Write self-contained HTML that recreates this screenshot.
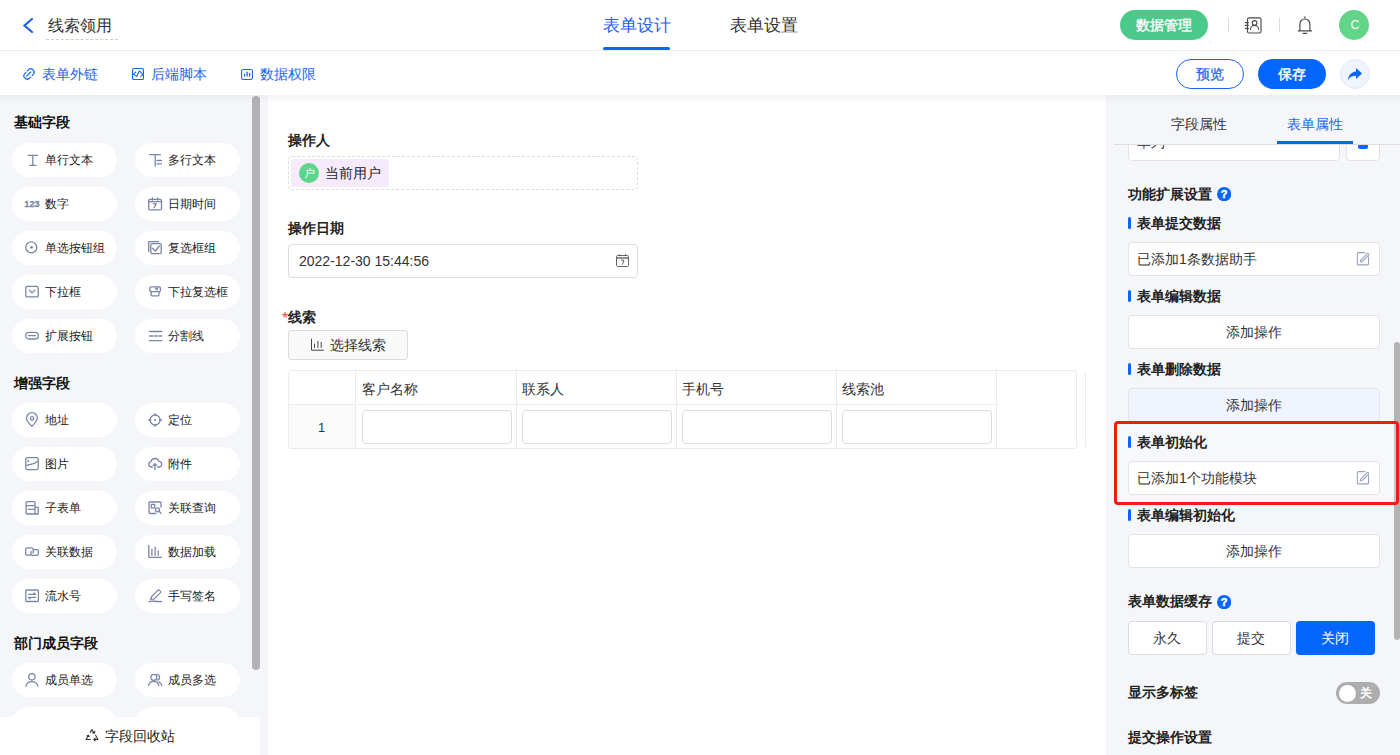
<!DOCTYPE html>
<html><head><meta charset="utf-8">
<style>
*{box-sizing:border-box;margin:0;padding:0}
html,body{width:1400px;height:755px;overflow:hidden;background:#fff;font-family:"Liberation Sans",sans-serif;color:#222}
.abs{position:absolute}
#hdr{position:absolute;left:0;top:0;width:1400px;height:51px;background:#fff;border-bottom:1px solid #ebebeb}
#tool{position:absolute;left:0;top:51px;width:1400px;height:44px;background:#fff}
#left{position:absolute;left:0;top:95px;width:268px;height:660px;background:#f5f6fa;overflow:hidden}
#center{position:absolute;left:268px;top:95px;width:838px;height:660px;background:#fff;overflow:hidden}
#right{position:absolute;left:1106px;top:95px;width:294px;height:660px;background:#f5f6fa;overflow:hidden}
.t{position:absolute;white-space:nowrap;line-height:1}
.sec{font-size:14px;font-weight:bold;color:#111}
.fb{position:absolute;width:105px;height:34px;background:#fff;border-radius:17px}
.fb span{position:absolute;left:33px;top:11px;font-size:12px;line-height:13px;color:#222;white-space:nowrap}
.fb i{position:absolute;left:13px;top:10px;width:14px;height:14px;font-style:normal}
.fb i svg{display:block}
.lnk{color:#1a64f0;font-size:14px}
.lbl{font-size:14px;font-weight:bold;color:#222}
.rbar{position:absolute;left:22px;width:3px;height:12px;margin-top:1px;background:#0565ff;border-radius:1.5px}
.rbox{position:absolute;left:22px;width:252px;height:34px;background:#fff;border:1px solid #e3e3e3;border-radius:4px}
.rbox .c{position:absolute;left:0;right:0;top:9px;text-align:center;font-size:14px;line-height:14px;color:#333}
.rbox .l{position:absolute;left:8px;top:9px;font-size:14px;line-height:14px;color:#333;white-space:nowrap}
.rbox svg{position:absolute;left:226px;top:7px}
th,td{padding:0}
.cell{position:absolute;border-right:1px solid #ebebeb}
.inp{position:absolute;background:#fff;border:1px solid #dcdcdc;border-radius:4px}
</style></head><body>
<div id="hdr">
  <svg class="abs" style="left:21px;top:17px" width="14" height="17" viewBox="0 0 14 17"><path d="M11 2L3.5 8.5 11 15" fill="none" stroke="#1a64f0" stroke-width="2.2" stroke-linecap="round"/></svg>
  <div class="t" style="left:48px;top:18px;font-size:16px;color:#333">线索领用</div>
  <div class="abs" style="left:46px;top:39px;width:72px;border-top:1px dashed #ccc"></div>
  <div class="t" style="left:603px;top:17px;font-size:17px;color:#1a64f0">表单设计</div>
  <div class="abs" style="left:603px;top:47px;width:67px;height:3px;background:#0565ff;border-radius:2px"></div>
  <div class="t" style="left:730px;top:17px;font-size:17px;color:#333">表单设置</div>
  <div class="abs" style="left:1120px;top:10px;width:88px;height:30px;border-radius:15px;background:#4bc98b"></div>
  <div class="t" style="left:1136px;top:18px;font-size:14px;color:#fff;-webkit-text-stroke:0.35px #fff">数据管理</div>
  <div class="abs" style="left:1228px;top:18px;width:1px;height:14px;background:#ddd"></div>
  <svg class="abs" style="left:1244px;top:16px" width="19" height="19" viewBox="0 0 19 19" fill="none" stroke="#4a4a4a" stroke-width="1.15" stroke-linecap="round"><rect x="3.5" y="1.8" width="13.5" height="15.2" rx="1.5"/><path d="M1.2 6.6h3.2M1.2 9.4h3.2M1.2 12.3h3.2"/><circle cx="10.6" cy="6.9" r="2.3"/><path d="M6.4 13.4a4.15 4 0 0 1 8.3 0"/></svg>
  <div class="abs" style="left:1279px;top:18px;width:1px;height:14px;background:#ddd"></div>
  <svg class="abs" style="left:1297px;top:16px" width="16" height="19" viewBox="0 0 16 19" fill="none" stroke="#4a4a4a" stroke-width="1.2" stroke-linecap="round" stroke-linejoin="round"><path d="M7.9 0.9v0.9M2.9 14.6V8.2a5 5.2 0 0 1 10 0V14.6M1.3 14.9h13.3M6.2 17.4h3.5"/></svg>
  <div class="abs" style="left:1339px;top:10px;width:30px;height:30px;border-radius:15px;background:#62d589"></div>
  <div class="t" style="left:1350.5px;top:19.3px;font-size:12.3px;color:#fff">C</div>
</div>
<div id="tool">
  <svg class="abs" style="left:23px;top:17px" width="12" height="12" viewBox="0 0 12 12" fill="none" stroke="#1a64f0" stroke-width="1.15" stroke-linecap="round"><path d="M4.3 2.8L5.3 1.9A3 3 0 0 1 10.1 6.7L9.1 7.7M7.7 9.2L6.7 10.1A3 3 0 0 1 1.9 5.3L2.9 4.3M3.6 8.2L7.8 4"/></svg>
  <div class="t lnk" style="left:42px;top:16px">表单外链</div>
  <svg class="abs" style="left:132px;top:17px" width="12" height="12" viewBox="0 0 12 12" fill="none" stroke="#1a64f0" stroke-width="1.1" stroke-linecap="round" stroke-linejoin="round"><rect x="0.55" y="0.55" width="10.9" height="10.9" rx="1.3"/><path d="M3.6 4.2L1.4 6.3 4.7 8.4 7.3 2.9 11 6.3 8.8 8.3"/></svg>
  <div class="t lnk" style="left:151px;top:16px">后端脚本</div>
  <svg class="abs" style="left:241px;top:18px" width="12" height="11" viewBox="0 0 12 11" fill="none" stroke="#1a64f0" stroke-width="1.1" stroke-linecap="round"><rect x="0.55" y="0.55" width="10.9" height="9.9" rx="1.8"/><path d="M3.5 5.2V6.9M6.1 3.1V6.9M8.6 4.5V6.9" stroke-width="1.3"/></svg>
  <div class="t lnk" style="left:260px;top:16px">数据权限</div>
  <div class="abs" style="left:1176px;top:8px;width:68px;height:30px;border-radius:15px;border:1px solid #1a64f0"></div>
  <div class="t" style="left:1196px;top:16px;font-size:14px;color:#1a64f0;-webkit-text-stroke:0.25px #1a64f0">预览</div>
  <div class="abs" style="left:1258px;top:8px;width:68px;height:30px;border-radius:15px;background:#0565ff"></div>
  <div class="t" style="left:1278px;top:16px;font-size:14px;color:#fff;-webkit-text-stroke:0.45px #fff">保存</div>
  <div class="abs" style="left:1340px;top:8px;width:30px;height:30px;border-radius:15px;background:#eff4fe;border:1px solid #e0e8fa"></div>
  <svg class="abs" style="left:1347px;top:16px" width="16" height="14" viewBox="0 0 16 14"><path d="M9 1l6 5.5L9 12V8.8C5 8.8 2.8 10 1 13c.5-4.5 3-8 8-8.5z" fill="#0565ff"/></svg>
</div>
<div id="left">
  <div class="t sec" style="left:14px;top:20px">基础字段</div><div class="fb" style="left:12px;top:48px"><i><svg width="14" height="14" viewBox="0 0 14 14" style="overflow:visible" fill="none" stroke="#7b86a6" stroke-width="1.3" stroke-linecap="round" stroke-linejoin="round"><path d="M3 2.3H12.6M4.8 12.4H10.9M7.8 2.3V12.4"/></svg></i><span>单行文本</span></div><div class="fb" style="left:135px;top:48px"><i><svg width="14" height="14" viewBox="0 0 14 14" style="overflow:visible" fill="none" stroke="#7b86a6" stroke-width="1.3" stroke-linecap="round" stroke-linejoin="round"><path d="M1.7 1.7H12.4M7.2 1.7V12.9M8.9 7.5H13.5M8.9 10.8H13.5"/></svg></i><span>多行文本</span></div><div class="fb" style="left:12px;top:92px"><i><span style="position:absolute;left:-0.8px;top:2.8px;font-size:9.2px;line-height:9px;font-weight:bold;-webkit-text-stroke:0.3px #7b86a6;letter-spacing:0.1px;color:#7b86a6;font-family:'Liberation Sans',sans-serif;font-style:normal">123</span></i><span>数字</span></div><div class="fb" style="left:135px;top:92px"><i><svg width="14" height="14" viewBox="0 0 14 14" style="overflow:visible" fill="none" stroke="#7b86a6" stroke-width="1.3" stroke-linecap="round" stroke-linejoin="round"><rect x="0.7" y="2.3" width="12.8" height="10.6" rx="1.5"/><path d="M4.4 1V3.2M9.7 1V3.2M0.7 4.6H13.5M5.3 6.6H8.2L6.1 10.7"/></svg></i><span>日期时间</span></div><div class="fb" style="left:12px;top:136px"><i><svg width="14" height="14" viewBox="0 0 14 14" style="overflow:visible" fill="none" stroke="#7b86a6" stroke-width="1.3" stroke-linecap="round" stroke-linejoin="round"><circle cx="6.3" cy="6.4" r="5.5"/><circle cx="6.5" cy="6.3" r="1.4" fill="#7b86a6" stroke="none"/></svg></i><span>单选按钮组</span></div><div class="fb" style="left:135px;top:136px"><i><svg width="14" height="14" viewBox="0 0 14 14" style="overflow:visible" fill="none" stroke="#7b86a6" stroke-width="1.3" stroke-linecap="round" stroke-linejoin="round"><path d="M0.7 10.6V0.7H10.6"/><rect x="2.8" y="2.6" width="10.4" height="10" rx="1"/><path d="M4.4 7.2L7.4 10 11.3 5"/></svg></i><span>复选框组</span></div><div class="fb" style="left:12px;top:180px"><i><svg width="14" height="14" viewBox="0 0 14 14" style="overflow:visible" fill="none" stroke="#7b86a6" stroke-width="1.3" stroke-linecap="round" stroke-linejoin="round"><rect x="0.8" y="1.4" width="12.4" height="10.5" rx="1.2"/><path d="M4.4 5.3L7.1 7.9 9.8 5.3"/></svg></i><span>下拉框</span></div><div class="fb" style="left:135px;top:180px"><i><svg width="14" height="14" viewBox="0 0 14 14" style="overflow:visible" fill="none" stroke="#7b86a6" stroke-width="1.3" stroke-linecap="round" stroke-linejoin="round"><rect x="1.75" y="1.85" width="10.7" height="4.7" rx="1.2"/><path d="M3.15 6.6V9.85A1 1 0 0 0 4.15 10.85H10.05A1 1 0 0 0 11.05 9.85V6.6M7.4 2.9L8.7 4.9 10 2.9"/></svg></i><span>下拉复选框</span></div><div class="fb" style="left:12px;top:224px"><i><svg width="14" height="14" viewBox="0 0 14 14" style="overflow:visible" fill="none" stroke="#7b86a6" stroke-width="1.3" stroke-linecap="round" stroke-linejoin="round"><rect x="0.7" y="3.4" width="12.6" height="6.6" rx="3.3"/><path d="M3.4 6.7H10.5"/></svg></i><span>扩展按钮</span></div><div class="fb" style="left:135px;top:224px"><i><svg width="14" height="14" viewBox="0 0 14 14" style="overflow:visible" fill="none" stroke="#7b86a6" stroke-width="1.3" stroke-linecap="round" stroke-linejoin="round"><path d="M1.6 2.5H13.7M1.6 7H4.9M6.5 7H9.3M11 7H13.7M1.6 11.7H13.7"/></svg></i><span>分割线</span></div><div class="t sec" style="left:14px;top:281px">增强字段</div><div class="fb" style="left:12px;top:308px"><i><svg width="14" height="14" viewBox="0 0 14 14" style="overflow:visible" fill="none" stroke="#7b86a6" stroke-width="1.3" stroke-linecap="round" stroke-linejoin="round"><path d="M6.9 13.3C4.2 10.7 1.5 8.3 1.5 5.1A5.4 5.4 0 0 1 12.3 5.1C12.3 8.3 9.6 10.7 6.9 13.3Z"/><circle cx="7" cy="5.3" r="1.7"/></svg></i><span>地址</span></div><div class="fb" style="left:135px;top:308px"><i><svg width="14" height="14" viewBox="0 0 14 14" style="overflow:visible" fill="none" stroke="#7b86a6" stroke-width="1.3" stroke-linecap="round" stroke-linejoin="round"><circle cx="7.1" cy="7" r="5"/><circle cx="7.1" cy="7" r="1.1" fill="#7b86a6" stroke="none"/><path d="M7.1 0.6V2.6M7.1 11.4V13.4M0.7 7H2.7M11.5 7H13.5"/></svg></i><span>定位</span></div><div class="fb" style="left:12px;top:352px"><i><svg width="14" height="14" viewBox="0 0 14 14" style="overflow:visible" fill="none" stroke="#7b86a6" stroke-width="1.3" stroke-linecap="round" stroke-linejoin="round"><rect x="0.8" y="0.7" width="12.4" height="12" rx="1.5"/><path d="M2.9 3.3L3.6 4.6M2 8.6C4.5 6.8 8.2 8.3 12.6 4.3"/></svg></i><span>图片</span></div><div class="fb" style="left:135px;top:352px"><i><svg width="14" height="14" viewBox="0 0 14 14" style="overflow:visible" fill="none" stroke="#7b86a6" stroke-width="1.3" stroke-linecap="round" stroke-linejoin="round"><path d="M4.3 10H3.3A2.7 2.7 0 0 1 2.9 4.7A4.1 4.1 0 0 1 10.8 4.3A2.8 2.8 0 0 1 10.8 10H9.7M6.9 12.5V6.6M5.1 8.4L6.9 6.6 8.7 8.4"/></svg></i><span>附件</span></div><div class="fb" style="left:12px;top:396px"><i><svg width="14" height="14" viewBox="0 0 14 14" style="overflow:visible" fill="none" stroke="#7b86a6" stroke-width="1.3" stroke-linecap="round" stroke-linejoin="round"><path d="M10 5.6V1.7A1 1 0 0 0 9 0.7H2.1A1 1 0 0 0 1.1 1.7V12A1 1 0 0 0 2.1 13H13.2V6.3H10V13M1.1 4.6H10M3.3 8.3H10"/></svg></i><span>子表单</span></div><div class="fb" style="left:135px;top:396px"><i><svg width="14" height="14" viewBox="0 0 14 14" style="overflow:visible" fill="none" stroke="#7b86a6" stroke-width="1.3" stroke-linecap="round" stroke-linejoin="round"><path d="M13 6V2A1 1 0 0 0 12 1H2A1 1 0 0 0 1 2V11.5A1 1 0 0 0 2 12.5H7.8"/><rect x="3.3" y="3.4" width="3.4" height="3.4"/><circle cx="9.5" cy="8.8" r="2"/><path d="M11 10.3L13 12.3"/></svg></i><span>关联查询</span></div><div class="fb" style="left:12px;top:440px"><i><svg width="14" height="14" viewBox="0 0 14 14" style="overflow:visible" fill="none" stroke="#7b86a6" stroke-width="1.3" stroke-linecap="round" stroke-linejoin="round"><path d="M5.6 10.2H2.3A1.7 1.7 0 0 1 0.6 8.5V4.5A1.7 1.7 0 0 1 2.3 2.8H6.5A1.7 1.7 0 0 1 8.2 4.5V8M8.5 4.6H11.7A1.7 1.7 0 0 1 13.4 6.3V8.7A1.7 1.7 0 0 1 11.7 10.4H7.7A1.7 1.7 0 0 1 6 8.7V6.5"/></svg></i><span>关联数据</span></div><div class="fb" style="left:135px;top:440px"><i><svg width="14" height="14" viewBox="0 0 14 14" style="overflow:visible" fill="none" stroke="#7b86a6" stroke-width="1.3" stroke-linecap="round" stroke-linejoin="round"><path d="M0.8 0.5V12.3H13.5M3.9 4.3V10.3M7.1 2.1V10.3M10.3 5.8V10.3"/></svg></i><span>数据加载</span></div><div class="fb" style="left:12px;top:484px"><i><svg width="14" height="14" viewBox="0 0 14 14" style="overflow:visible" fill="none" stroke="#7b86a6" stroke-width="1.3" stroke-linecap="round" stroke-linejoin="round"><rect x="0.8" y="1" width="12.6" height="11.5" rx="1"/><path d="M3.5 5.3H10.5L8.9 3.9M10.5 8.4H3.5L5.1 9.8"/></svg></i><span>流水号</span></div><div class="fb" style="left:135px;top:484px"><i><svg width="14" height="14" viewBox="0 0 14 14" style="overflow:visible" fill="none" stroke="#7b86a6" stroke-width="1.3" stroke-linecap="round" stroke-linejoin="round"><path d="M2.7 10.3L3.5 7.6 9.8 1.4A1.3 1.3 0 0 1 11.6 1.4L12.3 2.1A1.3 1.3 0 0 1 12.3 3.9L6 10.1ZM1 12.6C3.5 11.4 6 12.8 13.6 12.5"/></svg></i><span>手写签名</span></div><div class="t sec" style="left:14px;top:541px">部门成员字段</div><div class="fb" style="left:12px;top:568px"><i><svg width="14" height="14" viewBox="0 0 14 14" style="overflow:visible" fill="none" stroke="#7b86a6" stroke-width="1.3" stroke-linecap="round" stroke-linejoin="round"><circle cx="6.9" cy="3.8" r="3.2"/><path d="M0.9 13.2C1.5 10.4 3.9 8.6 6.9 8.6S12.3 10.4 12.9 13.2"/></svg></i><span>成员单选</span></div><div class="fb" style="left:135px;top:568px"><i><svg width="14" height="14" viewBox="0 0 14 14" style="overflow:visible" fill="none" stroke="#7b86a6" stroke-width="1.3" stroke-linecap="round" stroke-linejoin="round"><circle cx="5.8" cy="4.3" r="3"/><path d="M0.6 12.6C1 9.8 3 8.3 5.8 8.3S10.4 9.8 10.8 12.6M8.7 1.3A3 3 0 0 1 9.3 7.2M11 8.9C12.6 9.7 13.5 11 13.8 12.6"/></svg></i><span>成员多选</span></div><div class="fb" style="left:12px;top:612px"><i><svg width="14" height="14" viewBox="0 0 14 14" style="overflow:visible" fill="none" stroke="#7b86a6" stroke-width="1.3" stroke-linecap="round" stroke-linejoin="round"><circle cx="6.9" cy="3.8" r="3.2"/><path d="M0.9 13.2C1.5 10.4 3.9 8.6 6.9 8.6S12.3 10.4 12.9 13.2"/></svg></i><span>部门单选</span></div><div class="fb" style="left:135px;top:612px"><i><svg width="14" height="14" viewBox="0 0 14 14" style="overflow:visible" fill="none" stroke="#7b86a6" stroke-width="1.3" stroke-linecap="round" stroke-linejoin="round"><circle cx="5.8" cy="4.3" r="3"/><path d="M0.6 12.6C1 9.8 3 8.3 5.8 8.3S10.4 9.8 10.8 12.6M8.7 1.3A3 3 0 0 1 9.3 7.2M11 8.9C12.6 9.7 13.5 11 13.8 12.6"/></svg></i><span>部门多选</span></div>
  <div class="abs" style="left:252px;top:1px;width:8px;height:574px;border-radius:4px;background:#b3b3b3"></div>
  <div class="abs" style="left:0;top:622px;width:260px;height:38px;background:#fff"></div>
  <svg class="abs" style="left:85px;top:633px" width="14" height="14" viewBox="0 0 14 14" fill="none" stroke="#333" stroke-width="1.1" stroke-linecap="round" stroke-linejoin="round"><path d="M5.2 4.4L7 1.5l2.3 3.8M9.9 3.4l-.6 1.9-1.9-.5M10.6 7.2l2.4 4.3H8.8M10.2 10.1L8.8 11.5l1.4 1.4M5.4 11.5H1l2.5-4.3M2.1 7.8l1.4-.6.6 1.5"/></svg>
  <div class="t" style="left:105px;top:634px;font-size:14px;color:#222">字段回收站</div>
</div>
<div id="center">
  
  <div class="t lbl" style="left:20px;top:38px">操作人</div>
  <div class="abs" style="left:20px;top:61px;width:350px;height:34px;border:1px dashed #ddd;border-radius:4px"></div>
  <div class="abs" style="left:23px;top:64px;width:98px;height:28px;background:#f6eafd;border-radius:2px"></div>
  <div class="abs" style="left:31px;top:68px;width:20px;height:20px;border-radius:10px;background:#5dd68b"></div>
  <div class="t" style="left:36px;top:73px;font-size:11px;color:#fff">户</div>
  <div class="t" style="left:57px;top:71px;font-size:14px;color:#222">当前用户</div>

  <div class="t lbl" style="left:20px;top:126px">操作日期</div>
  <div class="inp" style="left:20px;top:149px;width:350px;height:34px"></div>
  <div class="t" style="left:31px;top:159px;font-size:14px;color:#333">2022-12-30 15:44:56</div>
  <svg class="abs" style="left:347px;top:158px" width="15" height="15" viewBox="0 0 15 15" fill="none" stroke="#555" stroke-width="0.9"><rect x="1.5" y="2.5" width="12" height="11" rx="1.2"/><path d="M1.5 5h12" stroke-width="1.3"/><path d="M4.5 1.2v2M10.5 1.2v2M6 7.2h3l-1.6 4.5"/></svg>

  <div class="t" style="left:14px;top:216px;font-size:16px;color:#e74c3c">*</div>
  <div class="t lbl" style="left:20px;top:215px">线索</div>
  <div class="abs" style="left:20px;top:235px;width:120px;height:30px;background:#f9f9f9;border:1px solid #dcdcdc;border-radius:3px"></div>
  <svg class="abs" style="left:310px;top:338px;position:fixed" width="15" height="14" viewBox="0 0 15 14" fill="none" stroke="#444" stroke-width="1" stroke-linecap="butt"><path d="M1.5 0.7V12.2H13.8M4.5 5.7V9.8M7.9 3V9.8M11.2 4V9.8"/></svg>
  <div class="t" style="left:62px;top:243px;font-size:14px;color:#333">选择线索</div>

  <div class="abs" style="left:20px;top:275px;width:789px;height:79px;border:1px solid #ebebeb;border-radius:3px"></div>
  <div class="abs" style="left:21px;top:310px;width:66px;height:43px;background:#fafafa"></div>
  <div class="abs" style="left:87px;top:276px;width:1px;height:77px;background:#ebebeb"></div>
  <div class="abs" style="left:248px;top:276px;width:1px;height:77px;background:#ebebeb"></div>
  <div class="abs" style="left:408px;top:276px;width:1px;height:77px;background:#ebebeb"></div>
  <div class="abs" style="left:568px;top:276px;width:1px;height:77px;background:#ebebeb"></div>
  <div class="abs" style="left:728px;top:276px;width:1px;height:77px;background:#ebebeb"></div>
  <div class="abs" style="left:21px;top:309px;width:66px;height:1px;background:#ebebeb"></div><div class="abs" style="left:90px;top:309px;width:638px;height:1px;background:#ebebeb"></div>
  <div class="abs" style="left:800px;top:275px;width:18px;height:79px;border-right:1px solid #ebebeb;border-top:1px solid transparent;border-bottom:1px solid transparent;border-radius:0 5px 5px 0"></div>
  <div class="t" style="left:94px;top:287px;font-size:14px;color:#333">客户名称</div>
  <div class="t" style="left:254px;top:287px;font-size:14px;color:#333">联系人</div>
  <div class="t" style="left:414px;top:287px;font-size:14px;color:#333">手机号</div>
  <div class="t" style="left:574px;top:287px;font-size:14px;color:#333">线索池</div>
  <div class="t" style="left:50px;top:326px;font-size:13px;color:#333">1</div>
  <div class="inp" style="left:94px;top:315px;width:150px;height:34px"></div>
  <div class="inp" style="left:254px;top:315px;width:150px;height:34px"></div>
  <div class="inp" style="left:414px;top:315px;width:150px;height:34px"></div>
  <div class="inp" style="left:574px;top:315px;width:150px;height:34px"></div>
</div>
<div id="right">
  <div class="abs" style="left:22px;top:41px;width:212px;height:25px;background:#fff;border:1px solid #e3e3e3;border-radius:4px"></div>
  <div class="abs" style="left:240px;top:41px;width:34px;height:25px;background:#fff;border:1px solid #e3e3e3;border-radius:4px"></div>
  <div class="t" style="left:31px;top:40px;font-size:14px;color:#333">单列</div>
  <div class="abs" style="left:252px;top:49px;width:10px;height:5px;background:#0565ff;border-radius:2px"></div>
  <div class="abs" style="left:0;top:0;width:294px;height:49px;background:#f5f6fa"></div>
  
  <div class="abs" style="left:8px;top:49px;width:286px;height:1px;background:#dedede"></div>
  <div class="t" style="left:65px;top:22px;font-size:14px;color:#333">字段属性</div>
  <div class="t" style="left:181px;top:22px;font-size:14px;color:#1a64f0">表单属性</div>
  <div class="abs" style="left:171px;top:46px;width:76px;height:3px;background:#0565ff"></div>

  <div class="t lbl" style="left:22px;top:92px">功能扩展设置</div>
  <svg class="abs" style="left:111px;top:91.8px" width="14.3" height="14.3" viewBox="0 0 14.3 14.3"><circle cx="7.15" cy="7.15" r="7.15" fill="#0565ff"/><text x="7.15" y="11.3" text-anchor="middle" font-size="11" font-weight="bold" fill="#fff" stroke="#fff" stroke-width="0.5" font-family="Liberation Sans">?</text></svg>

  <div class="rbar" style="top:121px"></div><div class="t lbl" style="left:31px;top:121px">表单提交数据</div>
  <div class="rbox" style="top:147px"><span class="l">已添加1条数据助手</span>
    <svg width="16" height="17" viewBox="0 0 16 17" fill="none" stroke="#9aa3bd" stroke-width="1.1" stroke-linecap="round" stroke-linejoin="round"><path d="M9.9 2.65H3.55A1.2 1.2 0 0 0 2.35 3.85V13.65A1.2 1.2 0 0 0 3.55 14.85H12.35A1.2 1.2 0 0 0 13.55 13.65V6.9"/><path d="M5.2 12L5.7 10.1 12.1 3.7A0.9 0.9 0 0 1 13.4 3.7L13.5 3.8A0.9 0.9 0 0 1 13.5 5.1L7.1 11.5Z"/></svg></div>
  <div class="rbar" style="top:194px"></div><div class="t lbl" style="left:31px;top:194px">表单编辑数据</div>
  <div class="rbox" style="top:220px"><span class="c">添加操作</span></div>
  <div class="rbar" style="top:267px"></div><div class="t lbl" style="left:31px;top:267px">表单删除数据</div>
  <div class="rbox" style="top:293px;background:#eff4fe"><span class="c">添加操作</span></div>
  <div class="abs" style="left:288px;top:247px;width:6px;height:298px;border-radius:3px;background:#b3b3b3"></div>
  <div class="abs" style="left:8px;top:326px;width:285px;height:84px;border:3px solid #f31a10;border-radius:4px;background:rgba(255,255,255,0.25)"></div>
  <div class="rbar" style="top:340px"></div><div class="t lbl" style="left:31px;top:340px">表单初始化</div>
  <div class="rbox" style="top:366px"><span class="l">已添加1个功能模块</span>
    <svg width="16" height="17" viewBox="0 0 16 17" fill="none" stroke="#9aa3bd" stroke-width="1.1" stroke-linecap="round" stroke-linejoin="round"><path d="M9.9 2.65H3.55A1.2 1.2 0 0 0 2.35 3.85V13.65A1.2 1.2 0 0 0 3.55 14.85H12.35A1.2 1.2 0 0 0 13.55 13.65V6.9"/><path d="M5.2 12L5.7 10.1 12.1 3.7A0.9 0.9 0 0 1 13.4 3.7L13.5 3.8A0.9 0.9 0 0 1 13.5 5.1L7.1 11.5Z"/></svg></div>
  <div class="rbar" style="top:413px"></div><div class="t lbl" style="left:31px;top:413px">表单编辑初始化</div>
  <div class="rbox" style="top:439px"><span class="c">添加操作</span></div>

  <div class="t lbl" style="left:22px;top:499px">表单数据缓存</div>
  <svg class="abs" style="left:111px;top:499.5px" width="14.3" height="14.3" viewBox="0 0 14.3 14.3"><circle cx="7.15" cy="7.15" r="7.15" fill="#0565ff"/><text x="7.15" y="11.3" text-anchor="middle" font-size="11" font-weight="bold" fill="#fff" stroke="#fff" stroke-width="0.5" font-family="Liberation Sans">?</text></svg>
  <div class="abs" style="left:22px;top:526px;width:79px;height:34px;background:#fff;border:1px solid #dcdcdc;border-radius:4px"></div>
  <div class="t" style="left:47px;top:536px;font-size:14px;color:#333">永久</div>
  <div class="abs" style="left:106px;top:526px;width:79px;height:34px;background:#fff;border:1px solid #dcdcdc;border-radius:4px"></div>
  <div class="t" style="left:131px;top:536px;font-size:14px;color:#333">提交</div>
  <div class="abs" style="left:190px;top:526px;width:79px;height:34px;background:#0565ff;border-radius:4px"></div>
  <div class="t" style="left:215px;top:536px;font-size:14px;color:#fff">关闭</div>

  <div class="t lbl" style="left:22px;top:590px">显示多标签</div>
  <div class="abs" style="left:230px;top:587px;width:44px;height:22px;border-radius:11px;background:#adadad"></div>
  <div class="abs" style="left:233px;top:589.5px;width:17px;height:17px;border-radius:9px;background:#fff"></div>
  <div class="t" style="left:254px;top:592px;font-size:12px;color:#fff;font-weight:bold">关</div>

  <div class="t lbl" style="left:22px;top:635px">提交操作设置</div>
</div>
<div class="abs" style="left:0;top:95px;width:1400px;height:9px;background:linear-gradient(rgba(0,0,0,0.04),rgba(0,0,0,0))"></div>
</body></html>
